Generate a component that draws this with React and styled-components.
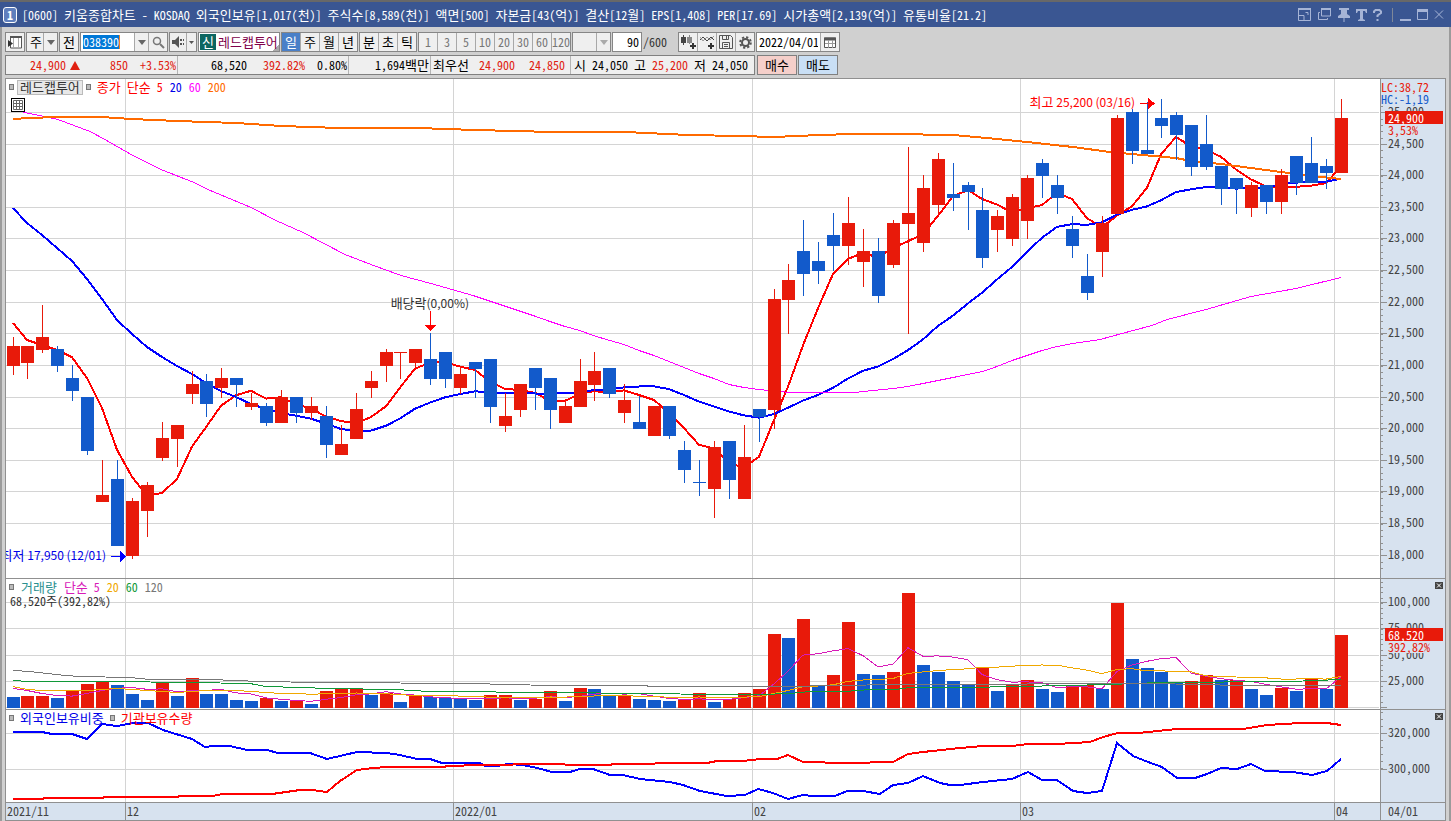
import React from 'react';
import styled, { createGlobalStyle } from 'styled-components';

const GlobalStyle = createGlobalStyle`
  * {
    box-sizing: border-box;
  }
  body {
    margin: 0;
    background: #d0d0d0;
  }
  body, button, input, select {
    font-family: 'Noto Sans Mono CJK KR', 'Noto Sans CJK KR', 'Liberation Sans', sans-serif;
    font-size: 12px;
    line-height: 14px;
  }
`;

const RED = '#e81a0a';
const BLUE = '#125acb';

// [direction, body top, body bottom, high, low]
const candles = [
  ['u', 346, 366, 337, 375], ['u', 346, 363, 346, 379], ['u', 337, 350, 305, 353], ['d', 349, 366, 346, 372],
  ['d', 378, 391, 365, 401], ['d', 397, 451, 397, 455], ['u', 495, 502, 460, 502], ['d', 479, 546, 460, 546],
  ['u', 501, 556, 498, 559], ['u', 485, 511, 482, 537], ['u', 438, 458, 422, 461], ['u', 425, 439, 425, 467],
  ['u', 384, 394, 371, 404], ['d', 381, 404, 374, 417], ['u', 378, 388, 368, 398], ['d', 378, 385, 378, 407],
  ['u', 403, 407, 393, 410], ['d', 406, 423, 403, 426], ['u', 397, 423, 390, 423], ['d', 397, 413, 397, 423],
  ['u', 406, 413, 397, 420], ['d', 416, 445, 406, 458], ['u', 444, 455, 425, 455], ['u', 409, 439, 393, 439],
  ['u', 381, 388, 371, 398], ['u', 352, 366, 349, 382], ['u', 352, 353, 352, 379], ['u', 349, 363, 349, 368],
  ['d', 359, 379, 333, 385], ['d', 352, 379, 352, 388], ['u', 374, 388, 366, 394], ['d', 362, 369, 362, 398],
  ['d', 359, 407, 359, 423], ['u', 416, 426, 393, 432], ['u', 384, 410, 384, 417], ['d', 368, 388, 368, 410],
  ['d', 378, 410, 378, 429], ['u', 406, 423, 400, 423], ['u', 381, 407, 359, 407], ['u', 371, 385, 352, 401],
  ['d', 368, 394, 368, 398], ['u', 400, 413, 384, 423], ['d', 422, 429, 396, 429], ['u', 406, 436, 406, 436],
  ['d', 406, 436, 406, 439], ['d', 450, 470, 441, 483], ['d', 482, 483, 460, 496], ['u', 447, 489, 441, 518],
  ['d', 441, 480, 441, 499], ['u', 457, 499, 425, 499], ['d', 409, 417, 409, 442], ['u', 299, 410, 289, 429],
  ['u', 280, 300, 264, 334], ['d', 251, 274, 220, 296], ['d', 261, 271, 242, 284], ['d', 235, 246, 213, 271],
  ['u', 223, 246, 197, 265], ['u', 251, 262, 229, 287], ['d', 251, 296, 238, 303], ['u', 223, 265, 220, 268],
  ['u', 213, 224, 147, 334], ['u', 188, 243, 175, 252], ['u', 159, 205, 153, 214], ['d', 194, 198, 163, 211],
  ['d', 185, 192, 182, 230], ['d', 210, 258, 188, 268], ['u', 216, 230, 210, 252], ['u', 197, 239, 194, 246],
  ['u', 178, 221, 175, 239], ['d', 163, 176, 159, 198], ['d', 185, 198, 175, 214], ['d', 229, 246, 216, 258],
  ['d', 276, 293, 254, 300], ['u', 223, 252, 216, 277], ['u', 118, 214, 115, 214], ['d', 112, 151, 109, 164],
  ['d', 150, 154, 102, 154], ['d', 118, 126, 99, 138], ['d', 115, 135, 112, 160], ['d', 125, 167, 125, 176],
  ['d', 144, 167, 115, 170], ['d', 166, 189, 166, 205], ['d', 178, 189, 178, 214], ['u', 185, 208, 182, 217],
  ['d', 185, 202, 185, 214], ['u', 175, 202, 169, 214], ['d', 156, 183, 156, 195], ['d', 163, 183, 137, 183],
  ['d', 166, 173, 159, 189], ['u', 118, 173, 99, 173],
];

const volumes = [
  697, 696, 696, 698, 691, 684, 681, 685, 694, 700, 682, 696, 678, 694, 694, 700, 701, 698,
  701, 700, 704, 691, 689, 688, 695, 693, 702, 695, 697, 698, 699, 700, 695, 695, 700, 699,
  691, 701, 688, 689, 695, 695, 699, 700, 701, 699, 693, 702, 699, 693, 689, 634, 638, 619,
  686, 675, 622, 674, 675, 672, 593, 665, 672, 681, 685, 667, 691, 684, 680, 689, 692, 686,
  685, 689, 603, 659, 668, 672, 683, 681, 675, 680, 680, 689, 695, 688, 691, 679, 689, 635,
];

// days whose volume bar is red
const risingVolumes = new Set([
  1, 2, 4, 5, 6, 10, 12, 17, 19, 21, 22, 23, 25, 27, 32, 33, 35, 36, 38, 41, 45, 46, 48, 49, 50,
  51, 53, 55, 56, 59, 60, 65, 67, 68, 71, 72, 74, 79, 80, 82, 85, 87, 89,
]);

const barX = (i) => Math.floor(7 + i * 14.922);

// moving average; the first values come from days left of the chart
const average = (values, days, head) =>
  values
    .map((v, i) => {
      if (i < head.length) return [barX(i) + 6, head[i]];
      const part = values.slice(i - days + 1, i + 1);
      return [barX(i) + 6, part.reduce((a, b) => a + b, 0) / days];
    })
    .map(([x, y]) => `${x},${y.toFixed(1)}`)
    .join(' ');

const closes = candles.map(([dir, top, bottom]) => (dir === 'u' ? top : bottom));
const ma5 = average(closes, 5, [323, 340, 345, 350]);
const ma20 = average(closes, 20, [
  208, 223, 235, 248, 261, 279, 299, 320, 334, 347, 357, 366, 374, 383, 391, 397, 404, 409, 413,
]);
const ma60 =
  '13,109 25,112 44,116 58,119 90,131 105,139 117,146 133,155 161,169 194,182 208,189 251,207 276,220 303,232 345,254 371,264 401,275 431,283 473,295 533,315 550,321 565,326 580,330 593,335 610,340 624,344 639,350 654,355 669,361 684,367 699,373 714,378 729,384 744,387 759,389 790,392 855,392 873,390 893,388 908,386 923,383 953,377 983,371 997,366 1012,360 1027,355 1042,350 1057,346 1073,343 1100,339 1133,330 1152,325 1167,319 1206,309 1251,296 1296,288 1341,277';
const ma200 =
  '13,119 29,118 58,117 102,117 131,119 177,121 236,123 281,126 340,128 417,128 475,130 553,132 625,132 688,135 740,136 773,137 820,135 853,134 893,134 953,135 997,139 1027,142 1073,147 1110,152 1153,156 1176,158 1191,161 1221,164 1251,168 1281,172 1313,176 1341,179';

const volMa5 = average(volumes, 5, [688, 690, 693, 695]);
const volMa20 = average(volumes, 20, [
  686, 689, 690, 690, 690, 690, 689, 688, 689, 690, 691, 692, 691, 690, 690, 690, 691, 692, 693,
]);
const volMa60 =
  '13,680 28,681 110,681 190,682 250,683 265,686 300,687 330,688 395,689 430,691 560,692 640,693 720,694 760,694 790,693 810,691 845,691 870,689 895,689 910,687 960,687 1020,686 1110,684 1160,682 1290,681 1341,679';
const volMa120 =
  '13,670 30,671 65,675 80,676 130,677 150,679 210,679 260,681 320,682 480,683 500,684 560,685 645,685 650,686 790,686 830,685 905,684 1150,683 1200,684 1240,685 1341,685';

const foreignLine =
  '13,732 42,732 52,734 72,734 87,739 102,724 117,726 133,723 148,723 163,730 192,739 205,747 213,746 230,746 247,750 267,750 278,753 310,753 327,759 357,752 387,753 400,755 417,759 430,759 442,763 480,763 485,766 497,766 508,764 523,765 537,768 552,772 570,772 580,769 593,769 610,775 623,775 640,779 670,782 683,785 700,791 727,796 745,795 758,789 773,793 788,799 803,795 813,796 835,796 847,791 863,791 880,794 893,785 908,783 923,776 940,783 950,785 960,785 983,782 1012,779 1028,772 1042,780 1057,780 1073,791 1087,793 1102,791 1117,743 1133,756 1148,762 1162,767 1177,778 1195,778 1207,774 1221,768 1237,769 1251,764 1265,771 1293,772 1312,775 1327,771 1341,759';
const institutionLine =
  '13,799 42,799 45,798 102,798 105,797 177,797 180,796 212,796 223,794 272,794 300,790 312,790 327,792 340,781 357,770 373,768 387,767 443,767 448,766 480,765 507,765 520,764 563,764 567,765 610,765 613,764 653,764 657,763 707,763 717,761 743,761 760,759 777,759 788,755 803,762 823,762 827,763 847,763 893,762 908,754 923,752 960,748 983,746 1012,746 1028,744 1057,744 1090,742 1103,737 1118,733 1138,733 1177,729 1243,729 1267,725 1300,723 1327,723 1341,725';

const priceLabels = [
  ['25,000', 112], ['24,500', 144], ['24,000', 175], ['23,500', 207], ['23,000', 238],
  ['22,500', 270], ['22,000', 302], ['21,500', 333], ['21,000', 365], ['20,500', 397],
  ['20,000', 428], ['19,500', 460], ['19,000', 491], ['18,500', 523], ['18,000', 555],
];
const volumeLabels = [['100,000', 602], ['75,000', 628], ['50,000', 655], ['25,000', 681], ['', 707]];
const holdingLabels = [['320,000', 733], ['300,000', 769]];
const months = [125, 453, 752, 1020, 1334];

const range = (from, to, step) =>
  Array.from({ length: Math.floor((to - from) / step) + 1 }, (_, i) => Math.round(from + i * step));

/* ---------- text ---------- */

const Hangul = styled.span`
  font-size: 13px;
`;

// Hangul is set one size larger than the half-width digits beside it
const Ko = ({ children }) =>
  children.split(/([가-힣]+)/).map((part, i) => (i % 2 ? <Hangul key={i}>{part}</Hangul> : part));

/* ---------- window ---------- */

const Window = styled.div`
  display: flex;
  flex-direction: column;
  min-height: 100vh;
  border-top: 2px solid #686868;
  background: #d0d0d0;
`;

const TitleBar = styled.header`
  display: flex;
  align-items: center;
  height: 25px;
  padding: 0 7px 0 3px;
  background: #3a5692;
  color: #fff;
`;

const WindowNumber = styled.span`
  width: 14px;
  height: 16px;
  margin-right: 5px;
  border: 1px solid #fff;
  border-radius: 3px;
  background: #5f7fbd;
  font-weight: bold;
  text-align: center;
`;

const Title = styled.h1`
  flex: 1;
  margin: 0;
  font-size: 12px;
  font-weight: normal;
  line-height: 20px;
  white-space: nowrap;
`;

const TitleButtons = styled.div`
  display: flex;
  align-items: center;
  gap: 6px;
`;

const TitleButton = styled.button`
  display: flex;
  padding: 0;
  border: 0;
  background: none;
  color: #a6b4d6;
`;

const TitleDivider = styled.span`
  width: 1px;
  height: 14px;
  margin: 0 1px 0 4px;
  background: #7f8899;
`;

const Content = styled.div`
  flex: 1;
  display: flex;
  flex-direction: column;
  padding: 5px 1px 0 3px;
  border: solid #9b9b9b;
  border-width: 0 2px;
`;

/* ---------- toolbar ---------- */

const Toolbar = styled.div`
  display: flex;
  gap: 1px;
  height: 20px;
`;

const Group = styled.div`
  display: flex;
  width: ${(p) => p.$width}px;
  height: 20px;
  border: 1px solid #868686;
  background: ${(p) => p.$bg || '#efefef'};
`;

const ToolButton = styled.button`
  flex: ${(p) => (p.$width ? 'none' : 1)};
  width: ${(p) => (p.$width ? `${p.$width}px` : 'auto')};
  min-width: 0;
  display: flex;
  align-items: center;
  justify-content: center;
  padding: 0;
  border: 0;
  border-left: 1px solid #a8a8a8;
  background: ${(p) => (p.$active ? '#4a80c8' : '#efefef')};
  color: ${(p) => (p.$active ? '#fff' : p.$muted ? '#777' : '#000')};
  &:first-child {
    border-left: 0;
  }
`;

const PlainSelect = styled.select`
  appearance: none;
  flex: 1;
  min-width: 0;
  padding: 0 0 0 3px;
  border: 0;
  border-radius: 0;
  background: transparent;
  color: #000;
  font-size: 13px;
  opacity: 1;
`;

const CodeField = styled.label`
  flex: 1;
  display: flex;
  align-items: center;
  padding-left: 2px;
  background: #fff;
`;

const CodeInput = styled.input`
  width: 37px;
  height: 14px;
  padding: 0;
  border: 0;
  border-right: 1px solid #f08020;
  background: #0078d7;
  color: #fff;
`;

const StockBadge = styled.span`
  width: 16px;
  margin: 1px 2px 1px 1px;
  background: #0c6660;
  color: #fff;
  font-size: 13px;
  line-height: 16px;
  text-align: center;
`;

const StockName = styled.span`
  flex: 1;
  color: #80004a;
  font-size: 13px;
  line-height: 18px;
  white-space: nowrap;
  background: linear-gradient(135deg, transparent 50%, #aaa 50%) right bottom / 6px 6px no-repeat;
`;

const ValueInput = styled.input`
  flex: 1;
  min-width: 0;
  padding: 0 2px;
  border: 0;
  background: #fff;
  text-align: ${(p) => p.$align || 'left'};
`;

const CountLabel = styled.span`
  width: 34px;
  line-height: 20px;
  color: #333;
`;

/* ---------- quote row ---------- */

const QuoteRow = styled.div`
  display: flex;
  gap: 1px;
  margin: 3px 0;
`;

const Quotes = styled.div`
  display: flex;
  width: 750px;
  height: 20px;
  margin-right: 1px;
  border: 1px solid #808080;
  background: #efefef;
  line-height: 18px;
`;

const QuoteCell = styled.div`
  display: flex;
  justify-content: flex-end;
  gap: ${(p) => p.$gap || 0}px;
  width: ${(p) => p.$width}px;
  padding-right: 1px;
  border-right: ${(p) => (p.$last ? 0 : 1)}px solid #b4b4b4;
  white-space: nowrap;
`;

const Quote = styled.span`
  width: ${(p) => (p.$width ? `${p.$width}px` : 'auto')};
  text-align: right;
  color: ${(p) => (p.$up ? '#e02010' : '#000')};
`;

const Triangle = styled.span`
  align-self: center;
  margin-left: 4px;
  border: solid transparent;
  border-width: 0 5px 9px;
  border-bottom-color: #e02010;
`;

const TradeButton = styled.button`
  width: 40px;
  height: 20px;
  padding: 0;
  border: 1px solid #808080;
  background: ${(p) => p.$bg};
  color: #000;
  font-size: 13px;
`;

/* ---------- chart ---------- */

const ChartFrame = styled.main`
  flex: 1;
  display: grid;
  grid-template-columns: 1fr 65px;
  grid-template-rows: 1fr 131px 93px 18px;
  min-height: 480px;
  margin-right: 2px;
  border: 1px solid #909090;
  border-bottom: 0;
`;

const Plot = styled.section`
  position: relative;
  overflow: hidden;
  border-bottom: 1px solid #909090;
  background: #fff;
`;

const Axis = styled.div`
  position: relative;
  overflow: hidden;
  border-left: 1px solid #909090;
  border-bottom: 1px solid #909090;
  background: #d7e2ef;
`;

const Drawing = styled.svg`
  position: absolute;
  inset: 0;
  width: 100%;
  height: 100%;
`;

const AxisLabel = styled.span`
  position: absolute;
  left: 7px;
  top: ${(p) => p.$at}%;
  margin-top: -8px;
  color: #444;
`;

const CurrentTag = styled.div`
  position: absolute;
  left: 4px;
  right: 2px;
  top: ${(p) => p.$at}%;
  padding-left: 3px;
  background: ${RED};
  color: #fff;
  line-height: 13px;
`;

const CurrentRate = styled.div`
  position: absolute;
  left: 7px;
  top: ${(p) => p.$at}%;
  background: #d7e2ef;
  color: ${RED};
  line-height: 12px;
`;

const Extremes = styled.div`
  position: absolute;
  left: 0;
  top: 2px;
  line-height: 12px;
  color: ${RED};
`;

const Low = styled.div`
  color: ${BLUE};
`;

const CloseButton = styled.button`
  position: absolute;
  top: 3px;
  right: 2px;
  display: flex;
  padding: 0;
  border: 0;
  background: #444;
  color: #fff;
`;

const Legend = styled.div`
  position: relative;
  display: flex;
  align-items: center;
  gap: ${(p) => p.$gap || 7}px;
  height: 16px;
  padding-left: 3px;
  white-space: nowrap;
`;

const Marker = styled.span`
  width: 5px;
  height: 6px;
  border: 1px solid #777;
  background: #bbb;
`;

const Key = styled.span`
  color: ${(p) => p.$color};
`;

const NameTag = styled.button`
  height: 15px;
  padding: 0 2px;
  border: 1px solid #bbb;
  background: #e8e8e8;
  color: #333;
  font-size: 13px;
  line-height: 12px;
`;

const TableButton = styled.button`
  position: relative;
  display: flex;
  margin: 3px 0 0 5px;
  padding: 1px;
  border: 1px solid #000;
  background: #fff;
  color: #666;
`;

const VolumeText = styled.div`
  position: relative;
  padding-left: 4px;
  color: #333;
  line-height: 12px;
`;

const Note = styled.span`
  position: absolute;
  right: ${(p) => p.$right}%;
  top: ${(p) => p.$top}%;
  margin-top: -8px;
  color: ${(p) => p.$color};
  font-family: 'Noto Sans CJK KR', sans-serif;
  white-space: nowrap;
`;

const Dates = styled.div`
  display: grid;
  grid-template-columns: 119fr 328fr 299fr 268fr 314fr 46fr;
  border-bottom: 1px solid #909090;
  background: #d7e2ef;
`;

const DateCell = styled.span`
  padding-left: 1px;
  border-left: ${(p) => (p.$first ? 0 : 1)}px solid #909090;
  color: #444;
  line-height: 15px;
  white-space: nowrap;
`;

const LastDate = styled(DateCell)`
  padding-left: 7px;
  border-bottom: 1px solid #909090;
  background: #d7e2ef;
`;

/* ---------- pieces ---------- */

const DownArrow = ({ color = '#666' }) => (
  <svg width="8" height="5" viewBox="0 0 8 5"><path d="M0 0h8L4 5z" fill={color} /></svg>
);

const Grid = ({ levels, top, bottom }) => (
  <g stroke="#d4d4d4" strokeWidth="1">
    {levels.map(([, y]) => <path key={y} d={`M6 ${y + 0.5}H1379`} />)}
    {months.map((x) => <path key={x} d={`M${x + 0.5} ${top}V${bottom}`} />)}
  </g>
);

const Line = ({ points, color, width = 2 }) => (
  <polyline
    points={points}
    fill="none"
    stroke={color}
    strokeWidth={width}
    transform={width === 1 ? 'translate(0 .5)' : undefined}
  />
);

const Ticks = ({ top, height, levels, minor }) => (
  <Drawing viewBox={`0 ${top} 64 ${height}`} preserveAspectRatio="none" shapeRendering="crispEdges" aria-hidden="true">
    <g stroke="#909090">
      {levels.map(([, y]) => <path key={y} d={`M0 ${y + 0.5}h6`} />)}
      {minor.map((y) => <path key={y} d={`M0 ${y + 0.5}h2`} />)}
    </g>
  </Drawing>
);

const CloseIcon = () => (
  <svg width="8" height="7" viewBox="0 0 8 7">
    <path d="M2 1.5l4 4M6 1.5l-4 4" stroke="currentColor" fill="none" />
  </svg>
);

const at = (y, top, height) => ((y - top) / height) * 100;

const TitleIcons = () => (
  <TitleButtons>
    <TitleButton aria-label="크기 조절">
      <svg width="13" height="13" viewBox="0 0 13 13" fill="none" stroke="currentColor">
        <path d="M.5 1h12v11.5H.5z" /><path d="M0 1h13" strokeWidth="2" />
        <path d="M1 7.5h5v5M7.5 4.5H10V7" />
      </svg>
    </TitleButton>
    <TitleButton aria-label="새 창">
      <svg width="15" height="13" viewBox="0 0 15 13" fill="none" stroke="currentColor">
        <path d="M4.5 1h9v7h-9z" /><path d="M4 1h10" strokeWidth="2" /><path d="M3 4.5H1.5v7h9V10" />
      </svg>
    </TitleButton>
    <TitleButton aria-label="고정">
      <svg width="12" height="14" viewBox="0 0 12 14" fill="currentColor">
        <path d="M1 0h10v2H9v4l3 2v2H0V8l3-2V2H1zM5.5 10h1v4h-1z" />
      </svg>
    </TitleButton>
    <TitleButton aria-label="글꼴">
      <svg width="11" height="12" viewBox="0 0 11 12" fill="currentColor">
        <path d="M0 0h11v4h-1L9 2H7v8l2 1v1H2v-1l2-1V2H2L1 4H0z" />
      </svg>
    </TitleButton>
    <TitleButton aria-label="도움말">
      <svg width="9" height="12" viewBox="0 0 9 12" fill="none" stroke="currentColor" strokeWidth="2">
        <path d="M1 4V2.5L2.5 1h4L8 2.5V4L4.5 6.5V8M4.5 10v2" />
      </svg>
    </TitleButton>
    <TitleDivider />
    <TitleButton aria-label="최소화">
      <svg width="11" height="12" viewBox="0 0 11 12"><path d="M0 10h11v2H0z" fill="currentColor" /></svg>
    </TitleButton>
    <TitleButton aria-label="최대화">
      <svg width="11" height="11" viewBox="0 0 11 11" fill="none" stroke="currentColor">
        <path d="M.5.5h10v10H.5z" /><path d="M0 1.5h11" strokeWidth="3" />
      </svg>
    </TitleButton>
    <TitleButton aria-label="닫기">
      <svg width="10" height="9" viewBox="0 0 10 9" fill="none" stroke="currentColor">
        <path d="M1 .5l8 8M9 .5l-8 8" />
      </svg>
    </TitleButton>
  </TitleButtons>
);

const ChartToolbar = () => (
  <Toolbar>
    <Group $width={20}>
      <ToolButton aria-label="패널">
        <svg width="14" height="13" viewBox="0 0 14 13">
          <path d="M2.5 1h11v11h-11z" fill="#fff" stroke="#555" /><path d="M2 1h12" stroke="#555" strokeWidth="2" />
          <path d="M5.5 2v10M10.5 2v10" stroke="#aaa" /><path d="M0 4l5 3.5L0 11z" fill="#333" />
        </svg>
      </ToolButton>
    </Group>
    <Group $width={32}>
      <PlainSelect aria-label="종목 구분"><option>주</option></PlainSelect>
      <ToolButton $width={14} aria-label="구분 열기"><DownArrow /></ToolButton>
    </Group>
    <Group $width={20}><ToolButton><Ko>전</Ko></ToolButton></Group>
    <Group $width={88}>
      <CodeField><CodeInput aria-label="종목코드" defaultValue="038390" /></CodeField>
      <ToolButton $width={14} aria-label="종목 목록"><DownArrow /></ToolButton>
      <ToolButton $width={19} aria-label="종목 검색">
        <svg width="13" height="13" viewBox="0 0 13 13" fill="none" stroke="#777">
          <circle cx="5" cy="5" r="3.5" strokeWidth="1.5" /><path d="M8 8l4 4" strokeWidth="2" />
        </svg>
      </ToolButton>
    </Group>
    <Group $width={28}>
      <ToolButton $width={16} aria-label="소리">
        <svg width="13" height="12" viewBox="0 0 13 12" fill="#555">
          <path d="M0 4h3l4-4v12L3 8H0zM8 3h2v2H8zM8 7h2v2H8zM11 3h1v2h-1zM11 7h1v2h-1z" />
        </svg>
      </ToolButton>
      <ToolButton aria-label="소리 설정"><svg width="5" height="3" viewBox="0 0 5 3"><path d="M0 0h5L2.5 3z" fill="#555" /></svg></ToolButton>
    </Group>
    <Group $width={82} $bg="#fff">
      <StockBadge>신</StockBadge>
      <StockName>레드캡투어</StockName>
    </Group>
    <Group $width={77}>
      <ToolButton $active><Ko>일</Ko></ToolButton>
      <ToolButton><Ko>주</Ko></ToolButton>
      <ToolButton><Ko>월</Ko></ToolButton>
      <ToolButton><Ko>년</Ko></ToolButton>
    </Group>
    <Group $width={58}>
      <ToolButton><Ko>분</Ko></ToolButton>
      <ToolButton><Ko>초</Ko></ToolButton>
      <ToolButton><Ko>틱</Ko></ToolButton>
    </Group>
    <Group $width={153}>
      {[1, 3, 5, 10, 20, 30, 60, 120].map((n) => <ToolButton key={n} $muted>{n}</ToolButton>)}
    </Group>
    <Group $width={39}>
      <PlainSelect aria-label="주기" disabled><option /></PlainSelect>
      <ToolButton $width={14} disabled aria-label="주기 열기"><DownArrow color="#aaa" /></ToolButton>
    </Group>
    <Group $width={30}>
      <ValueInput aria-label="봉 개수" defaultValue="90" $align="right" />
    </Group>
    <CountLabel>/600</CountLabel>
    <Group $width={77}>
      <ToolButton aria-label="봉 추가">
        <svg width="15" height="14" viewBox="0 0 15 14">
          <path d="M0 2h5v6H0zM2 0h1v10H2z" fill="#444" /><path d="M6 2h5v6H6zM8 0h1v9H8z" fill="#888" />
          <path d="M9 11h6M12 8v6" stroke="#333" strokeWidth="2" />
        </svg>
      </ToolButton>
      <ToolButton aria-label="지표 추가">
        <svg width="15" height="14" viewBox="0 0 15 14" fill="none">
          <path d="M0 5l3-3 4 4 4-4 3 3" stroke="#444" /><path d="M0 2l3 4 4-4 3 3 4-4" stroke="#999" />
          <path d="M8 11h6M11 8v6" stroke="#333" strokeWidth="2" />
        </svg>
      </ToolButton>
      <ToolButton aria-label="저장">
        <svg width="14" height="14" viewBox="0 0 14 14" fill="none" stroke="#555">
          <path d="M.5.5h11l2 2v11H.5z" /><path d="M3.5.5v4h6v-4M3.5 13V7.5h7V13M5 9.5h4M5 11.5h4M7.5 1v3" />
        </svg>
      </ToolButton>
      <ToolButton aria-label="설정">
        <svg width="13" height="13" viewBox="0 0 13 13" fill="none" stroke="#555">
          <circle cx="6.5" cy="6.5" r="3.5" strokeWidth="2" />
          <circle cx="6.5" cy="6.5" r="5.3" strokeWidth="2" strokeDasharray="2.2 1.96" />
        </svg>
      </ToolButton>
    </Group>
    <Group $width={84}>
      <ValueInput aria-label="기준일" defaultValue="2022/04/01" />
      <ToolButton $width={19} aria-label="달력">
        <svg width="12" height="11" viewBox="0 0 12 11" fill="none" stroke="#555">
          <path d="M.5 1h11v9.5H.5z" fill="#fff" /><path d="M0 2h12" strokeWidth="3" /><path d="M4.5 3v8M8.5 3v8M1 6.5h10" stroke="#999" />
        </svg>
      </ToolButton>
    </Group>
  </Toolbar>
);

const QuoteBar = () => (
  <QuoteRow>
    <Quotes>
      <QuoteCell $width={172}>
        <Quote $up>24,900</Quote>
        <Triangle />
        <Quote $up $width={48}>850</Quote>
        <Quote $up $width={48}>+3.53%</Quote>
      </QuoteCell>
      <QuoteCell $width={171}>
        <Quote>68,520</Quote>
        <Quote $up $width={58}>392.82%</Quote>
        <Quote $width={42}>0.80%</Quote>
      </QuoteCell>
      <QuoteCell $width={82}><Quote><Ko>1,694백만</Ko></Quote></QuoteCell>
      <QuoteCell $width={140}>
        <Quote><Ko>최우선</Ko></Quote>
        <Quote $up $width={46}>24,900</Quote>
        <Quote $up $width={50}>24,850</Quote>
        <Quote $width={4} />
      </QuoteCell>
      <QuoteCell $width={178} $gap={6} $last>
        <Quote><Ko>시</Ko></Quote>
        <Quote>24,050</Quote>
        <Quote><Ko>고</Ko></Quote>
        <Quote $up>25,200</Quote>
        <Quote><Ko>저</Ko></Quote>
        <Quote>24,050</Quote>
      </QuoteCell>
    </Quotes>
    <TradeButton $bg="#f5cfca">매수</TradeButton>
    <TradeButton $bg="#c9dff5">매도</TradeButton>
  </QuoteRow>
);

const PricePane = () => (
  <>
    <Plot aria-label="가격 차트">
      <Drawing viewBox="6 79 1374 499" preserveAspectRatio="none" shapeRendering="crispEdges" aria-hidden="true">
        <Grid levels={priceLabels} top={79} bottom={578} />
        <Line points={ma5} color="#f00" />
        <Line points={ma20} color="#00f" />
        <Line points={ma60} color="#f0f" width={1} />
        <Line points={ma200} color="#ff6a00" />
        {candles.map(([dir, top, bottom, high, low], i) => (
          <g key={i} fill={dir === 'u' ? RED : BLUE}>
            <rect x={barX(i) + 6} y={high} width="1" height={low - high} />
            <rect x={barX(i)} y={top} width="13" height={bottom - top} />
          </g>
        ))}
        <path d="M1140 103h8v-5l7 5.5-7 5.5v-5h-8z" fill="#f00" />
        <path d="M111 556h9v-5l6 5.5-6 5.5v-5h-9z" fill="#00f" />
        <path d="M430 311h1v14h5l-5.5 6-5.5-6h5z" fill="#f00" />
      </Drawing>
      <Legend $gap={3}>
        <Marker />
        <NameTag>레드캡투어</NameTag>
        <Marker />
        <Legend>
          <Key $color="#f00"><Ko>종가 단순 5</Ko></Key>
          <Key $color="#0000e8">20</Key>
          <Key $color="#f0f">60</Key>
          <Key $color="#ff6a00">200</Key>
        </Legend>
      </Legend>
      <TableButton aria-label="데이터 표">
        <svg width="10" height="10" viewBox="0 0 10 10" fill="none" stroke="currentColor">
          <path d="M.5.5h9v9h-9zM3.5 1v8M6.5 1v8M1 3.5h8M1 6.5h8" />
        </svg>
      </TableButton>
      <Note $right={(245 / 1374) * 100} $top={at(103, 79, 499)} $color="#f00"><Ko>최고 25,200 (03/16)</Ko></Note>
      <Note $right={(911 / 1374) * 100} $top={at(304, 79, 499)} $color="#333"><Ko>배당락(0,00%)</Ko></Note>
      <Note $right={(1274 / 1374) * 100} $top={at(556, 79, 499)} $color="#0000e8"><Ko>최저 17,950 (12/01)</Ko></Note>
    </Plot>
    <Axis>
      <Ticks top={79} height={499} levels={priceLabels} minor={range(106, 574, 6.33)} />
      {priceLabels.map(([text, y]) => <AxisLabel key={text} $at={at(y, 79, 499)}>{text}</AxisLabel>)}
      <Extremes>LC:38,72<Low>HC:-1,19</Low></Extremes>
      <CurrentRate $at={at(124, 79, 499)}>3,53%</CurrentRate>
      <CurrentTag $at={at(111, 79, 499)}>24,900</CurrentTag>
    </Axis>
  </>
);

const VolumePane = () => (
  <>
    <Plot aria-label="거래량 차트">
      <Drawing viewBox="6 579 1374 130" preserveAspectRatio="none" shapeRendering="crispEdges" aria-hidden="true">
        <Grid levels={volumeLabels} top={579} bottom={709} />
        {volumes.map((y, i) => (
          <rect key={i} x={barX(i)} y={y} width="13" height={708 - y} fill={risingVolumes.has(i) ? RED : BLUE} />
        ))}
        <Line points={volMa5} color="#d81ab8" width={1} />
        <Line points={volMa20} color="#f0a800" width={1} />
        <Line points={volMa60} color="#109838" width={1} />
        <Line points={volMa120} color="#777" width={1} />
      </Drawing>
      <Legend>
        <Marker />
        <Key $color="#2a9090"><Ko>거래량</Ko></Key>
        <Key $color="#d81ab8"><Ko>단순 5</Ko></Key>
        <Key $color="#f0a800">20</Key>
        <Key $color="#109838">60</Key>
        <Key $color="#777">120</Key>
      </Legend>
      <VolumeText>68,520주(392,82%)</VolumeText>
    </Plot>
    <Axis>
      <Ticks top={579} height={130} levels={volumeLabels} minor={range(582, 706, 5.2)} />
      {volumeLabels.map(([text, y]) => <AxisLabel key={y} $at={at(y, 579, 130)}>{text}</AxisLabel>)}
      <CurrentRate $at={at(641, 579, 130)}>392,82%</CurrentRate>
      <CurrentTag $at={at(628, 579, 130)}>68,520</CurrentTag>
      <CloseButton aria-label="거래량 닫기"><CloseIcon /></CloseButton>
    </Axis>
  </>
);

const HoldingPane = () => (
  <>
    <Plot aria-label="보유 차트">
      <Drawing viewBox="6 710 1374 92" preserveAspectRatio="none" shapeRendering="crispEdges" aria-hidden="true">
        <Grid levels={holdingLabels} top={710} bottom={802} />
        <Line points={foreignLine} color="#00f" />
        <Line points={institutionLine} color="#f00" />
      </Drawing>
      <Legend $gap={6}>
        <Marker />
        <Key $color="#0000e8"><Ko>외국인보유비중</Ko></Key>
        <Marker />
        <Key $color="#f00"><Ko>기관보유수량</Ko></Key>
      </Legend>
    </Plot>
    <Axis>
      <Ticks top={710} height={92} levels={holdingLabels} minor={range(712, 768, 7)} />
      {holdingLabels.map(([text, y]) => <AxisLabel key={text} $at={at(y, 710, 92)}>{text}</AxisLabel>)}
      <CloseButton aria-label="보유 닫기"><CloseIcon /></CloseButton>
    </Axis>
  </>
);

const App = () => {
  return (
    <Window>
      <GlobalStyle />
      <TitleBar>
        <WindowNumber>1</WindowNumber>
        <Title>
          <Ko>[0600] 키움종합차트 - KOSDAQ 외국인보유[1,017(천)] 주식수[8,589(천)] 액면[500] 자본금[43(억)] 결산[12월] EPS[1,408] PER[17.69] 시가총액[2,139(억)] 유통비율[21.2]</Ko>
        </Title>
        <TitleIcons />
      </TitleBar>
      <Content>
        <ChartToolbar />
        <QuoteBar />
        <ChartFrame>
          <PricePane />
          <VolumePane />
          <HoldingPane />
          <Dates>
            <DateCell $first>2021/11</DateCell>
            <DateCell>12</DateCell>
            <DateCell>2022/01</DateCell>
            <DateCell>02</DateCell>
            <DateCell>03</DateCell>
            <DateCell>04</DateCell>
          </Dates>
          <LastDate>04/01</LastDate>
        </ChartFrame>
      </Content>
    </Window>
  );
};

export default App;
